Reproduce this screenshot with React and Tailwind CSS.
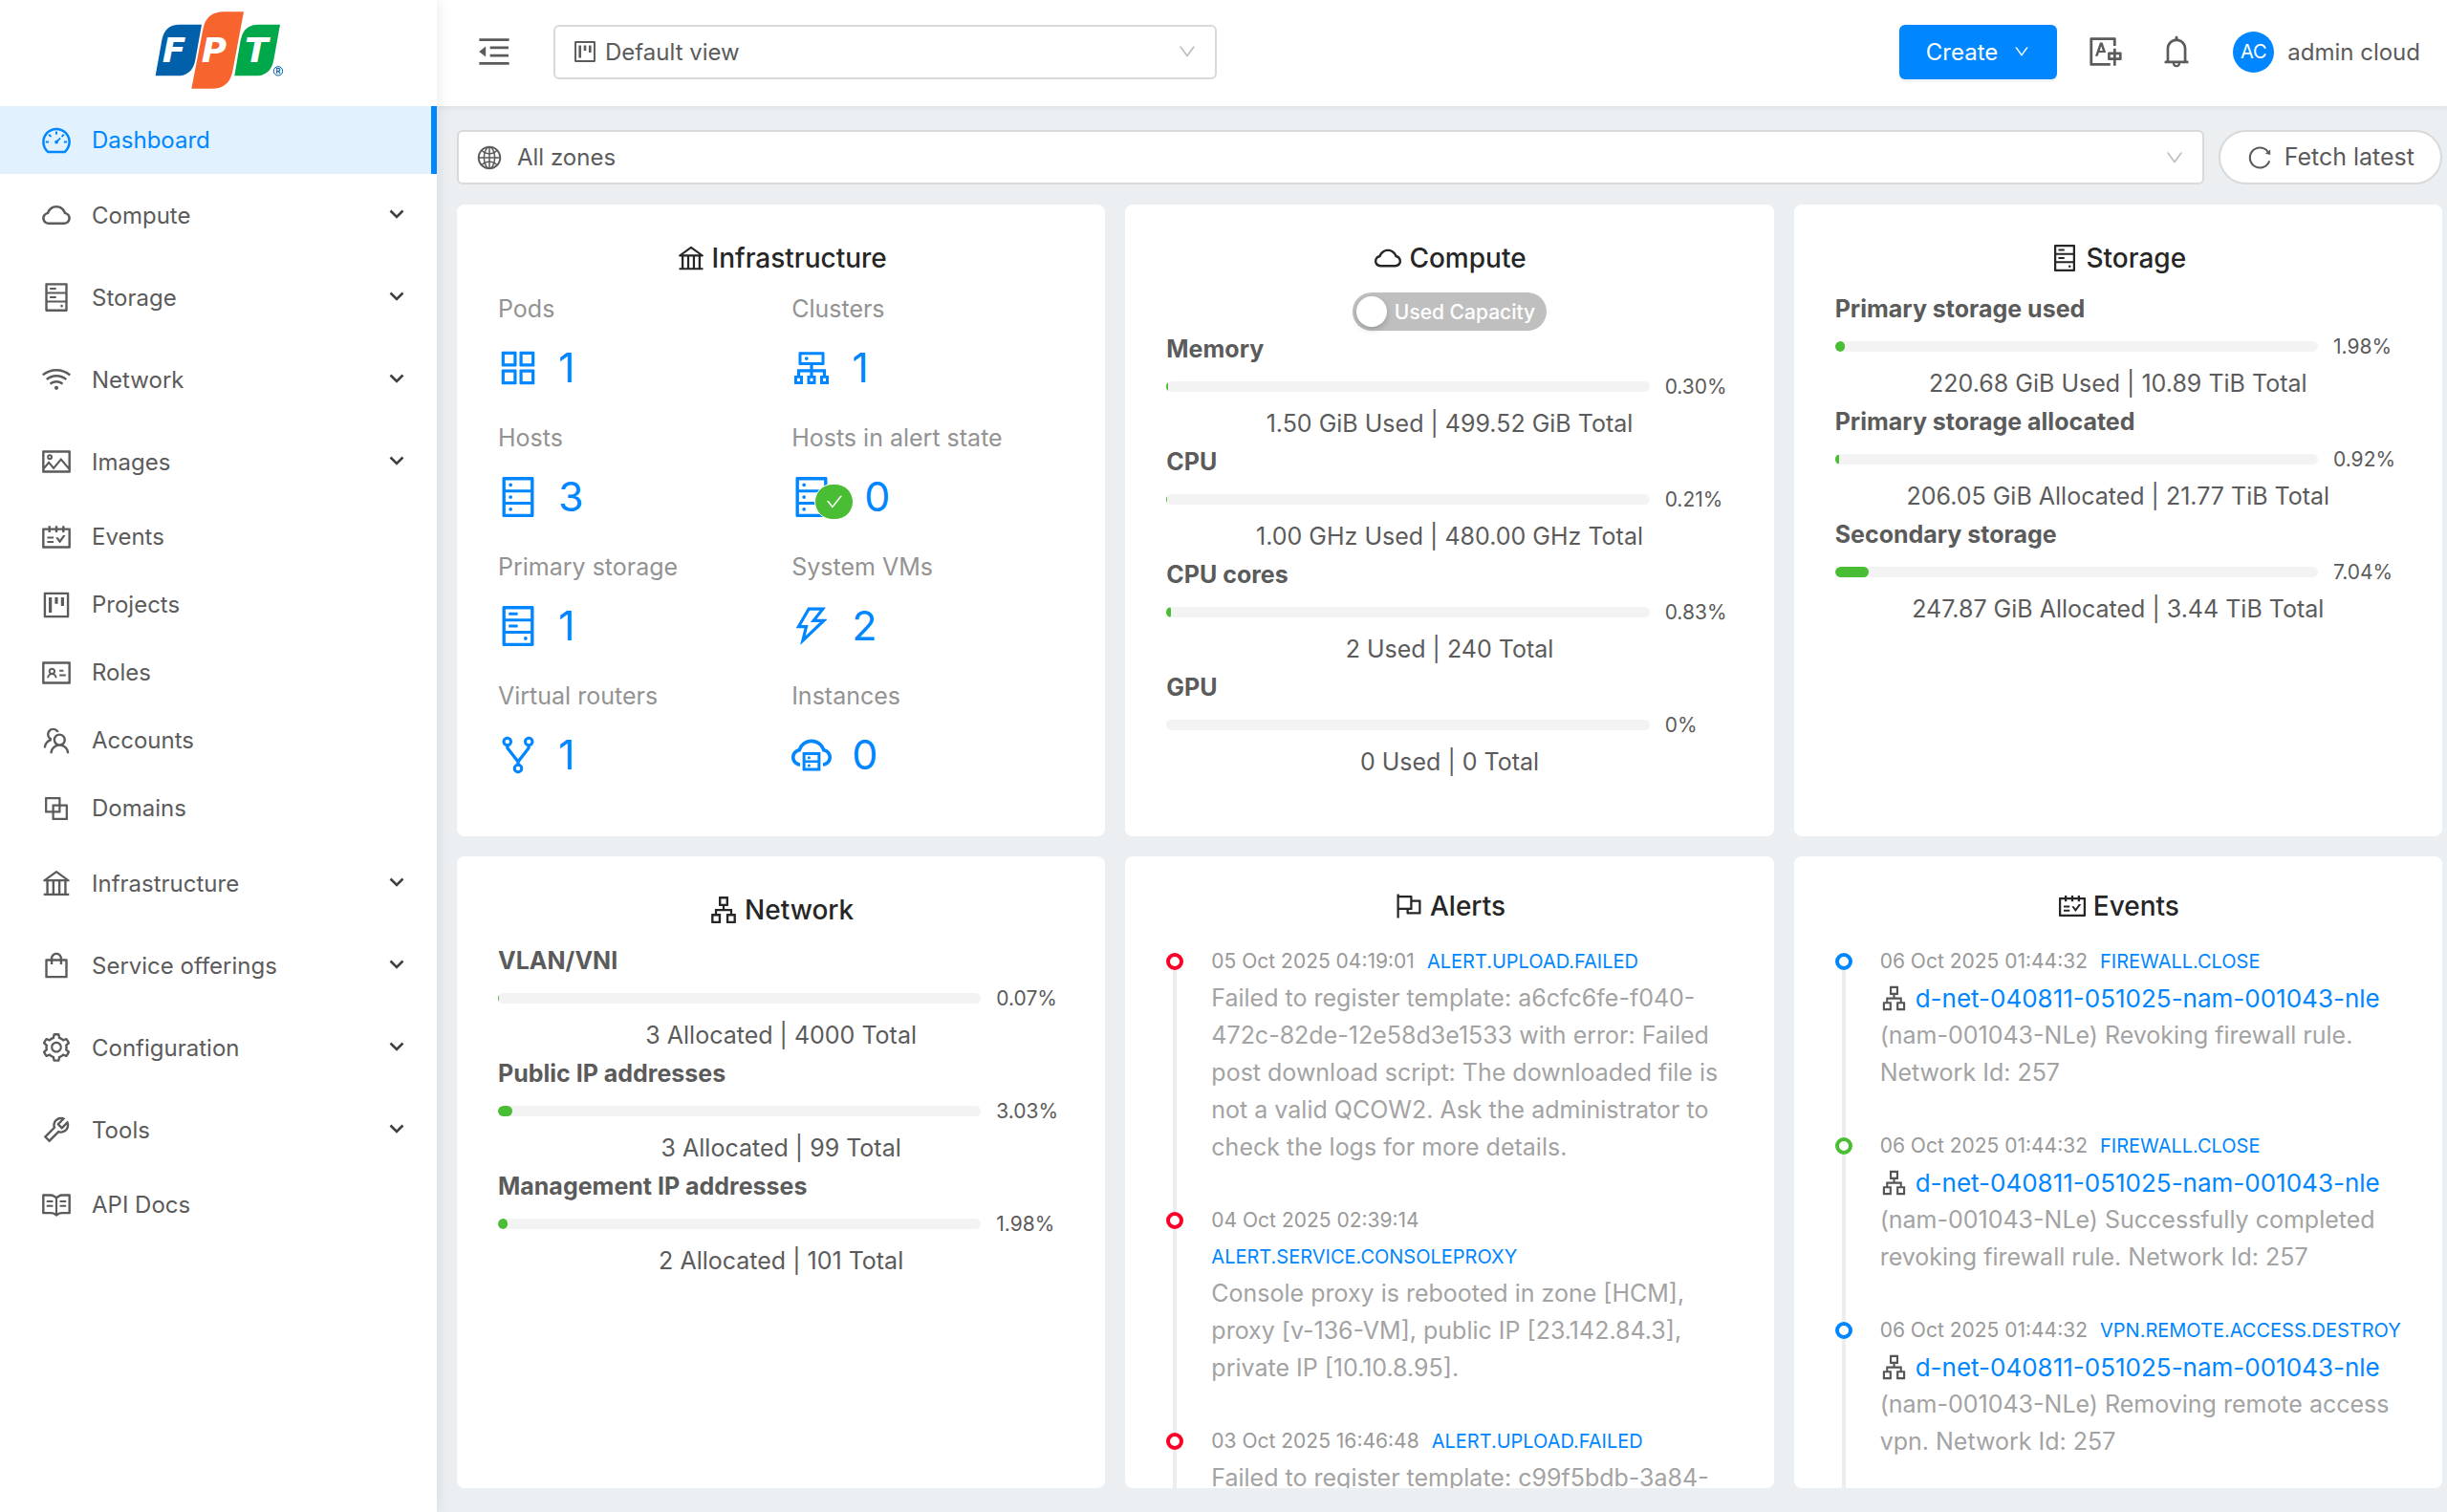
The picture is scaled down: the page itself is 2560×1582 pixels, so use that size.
import { AiOutlineDashboard, AiOutlineCloud, AiOutlineHdd, AiOutlineWifi, AiOutlinePicture, AiOutlineSchedule, AiOutlineProject, AiOutlineIdcard, AiOutlineTeam, AiOutlineBlock, AiOutlineBank, AiOutlineShopping, AiOutlineSetting, AiOutlineTool, AiOutlineRead, AiOutlineMenuFold, AiOutlineTranslation, AiOutlineBell, AiOutlineReload, AiOutlineGlobal, AiOutlineAppstore, AiOutlineCluster, AiOutlineDatabase, AiOutlineThunderbolt, AiOutlineFork, AiOutlineCloudServer, AiOutlineApartment, AiOutlineFlag, AiOutlineDown, AiOutlineCheck } from "react-icons/ai";

const MENU = [
  { label: "Dashboard", icon: AiOutlineDashboard, active: true },
  { label: "Compute", icon: AiOutlineCloud, sub: true },
  { label: "Storage", icon: AiOutlineHdd, sub: true },
  { label: "Network", icon: AiOutlineWifi, sub: true },
  { label: "Images", icon: AiOutlinePicture, sub: true },
  { label: "Events", icon: AiOutlineSchedule },
  { label: "Projects", icon: AiOutlineProject },
  { label: "Roles", icon: AiOutlineIdcard },
  { label: "Accounts", icon: AiOutlineTeam },
  { label: "Domains", icon: AiOutlineBlock },
  { label: "Infrastructure", icon: AiOutlineBank, sub: true },
  { label: "Service offerings", icon: AiOutlineShopping, sub: true },
  { label: "Configuration", icon: AiOutlineSetting, sub: true },
  { label: "Tools", icon: AiOutlineTool, sub: true },
  { label: "API Docs", icon: AiOutlineRead },
];

const STATS = [
  { label: "Pods", value: 1, icon: AiOutlineAppstore },
  { label: "Clusters", value: 1, icon: AiOutlineCluster },
  { label: "Hosts", value: 3, icon: AiOutlineDatabase },
  { label: "Hosts in alert state", value: 0, icon: AiOutlineDatabase, ok: true },
  { label: "Primary storage", value: 1, icon: AiOutlineHdd },
  { label: "System VMs", value: 2, icon: AiOutlineThunderbolt },
  { label: "Virtual routers", value: 1, icon: AiOutlineFork },
  { label: "Instances", value: 0, icon: AiOutlineCloudServer },
];

const COMPUTE = [
  { label: "Memory", pct: "0.30%", text: "1.50 GiB Used | 499.52 GiB Total" },
  { label: "CPU", pct: "0.21%", text: "1.00 GHz Used | 480.00 GHz Total" },
  { label: "CPU cores", pct: "0.83%", text: "2 Used | 240 Total" },
  { label: "GPU", pct: "0%", text: "0 Used | 0 Total" },
];
const STORAGE = [
  { label: "Primary storage used", pct: "1.98%", text: "220.68 GiB Used | 10.89 TiB Total" },
  { label: "Primary storage allocated", pct: "0.92%", text: "206.05 GiB Allocated | 21.77 TiB Total" },
  { label: "Secondary storage", pct: "7.04%", text: "247.87 GiB Allocated | 3.44 TiB Total" },
];
const NETWORK = [
  { label: "VLAN/VNI", pct: "0.07%", text: "3 Allocated | 4000 Total" },
  { label: "Public IP addresses", pct: "3.03%", text: "3 Allocated | 99 Total" },
  { label: "Management IP addresses", pct: "1.98%", text: "2 Allocated | 101 Total" },
];

const ALERTS = [
  { time: "05 Oct 2025 04:19:01", type: "ALERT.UPLOAD.FAILED", dot: "border-[#fa0028]", text: "Failed to register template: a6cfc6fe-f040-472c-82de-12e58d3e1533 with error: Failed post download script: The downloaded file is not a valid QCOW2. Ask the administrator to check the logs for more details." },
  { time: "04 Oct 2025 02:39:14", type: "ALERT.SERVICE.CONSOLEPROXY", dot: "border-[#fa0028]", text: "Console proxy is rebooted in zone [HCM], proxy [v-136-VM], public IP [23.142.84.3], private IP [10.10.8.95]." },
  { time: "03 Oct 2025 16:46:48", type: "ALERT.UPLOAD.FAILED", dot: "border-[#fa0028]", text: "Failed to register template: c99f5bdb-3a84-" },
];
const NET = "d-net-040811-051025-nam-001043-nle";
const EVENTS = [
  { time: "06 Oct 2025 01:44:32", type: "FIREWALL.CLOSE", dot: "border-[#0086ff]", link: NET, text: "(nam-001043-NLe) Revoking firewall rule. Network Id: 257" },
  { time: "06 Oct 2025 01:44:32", type: "FIREWALL.CLOSE", dot: "border-[#49bd34]", link: NET, text: "(nam-001043-NLe) Successfully completed revoking firewall rule. Network Id: 257" },
  { time: "06 Oct 2025 01:44:32", type: "VPN.REMOTE.ACCESS.DESTROY", dot: "border-[#0086ff]", link: NET, text: "(nam-001043-NLe) Removing remote access vpn. Network Id: 257" },
];

function Logo() {
  return (
    <svg viewBox="-4 0 480 330" className="h-[110px] w-[160px]" role="img" aria-label="FPT">
      <path d="M182 77L162 188Q153 238 104 238H37L57 126Q66 77 112 77Z" fill="#0060a9" />
      <path d="M314 37L279 224Q268 278 214 278H150L186 92Q196 37 252 37Z" fill="#f8642d" />
      <path d="M428 77L408 188Q399 238 350 238H285L304 126Q313 77 360 77Z" fill="#00a84c" />
      <g fill="#fff" fontFamily="'DejaVu Sans', sans-serif" fontWeight="700" fontStyle="italic" fontSize="108">
        <text x="58" y="196">F</text>
        <text x="181" y="196">P</text>
        <text x="317" y="196">T</text>
      </g>
      <circle cx="422" cy="223" r="14" fill="none" stroke="#0060a9" strokeWidth="3" />
      <text x="422" y="231" textAnchor="middle" fontSize="23" fontWeight="700" fill="#0060a9" fontFamily="Inter, sans-serif">R</text>
    </svg>
  );
}

function MenuItem({ label, icon: Icon, active, sub }) {
  return (
    <a
      href="#"
      className={
        "flex items-center pl-[42px] pr-[34px] " +
        (sub ? "my-2 h-[70px] " : "h-[71px] ") +
        (active ? "border-r-[6px] border-[#0086ff] bg-[#e1f2fe] text-[#0086ff]" : "")
      }
    >
      <Icon className="size-[34px]" />
      <span className="ml-5 flex-1">{label}</span>
      {sub && <Chevron />}
    </a>
  );
}

function Chevron() {
  return (
    <svg viewBox="0 0 16 12" className="h-3 w-4" fill="none" stroke="#404040" strokeWidth="2.6">
      <path d="M1.500 1.500L8 8L14.500 1.500" />
    </svg>
  );
}

function Card({ title, icon: Icon, children, tight }) {
  return (
    <section className={"h-[661px] overflow-hidden rounded-lg bg-white px-[43px] " + (tight ? "pt-8" : "pt-9")}>
      <h2 className="flex h-10 items-center justify-center gap-[6px] text-[28px] font-medium text-[#262626]">
        <Icon className="size-8" />
        {title}
      </h2>
      {children}
    </section>
  );
}

function Meters({ items }) {
  return items.map((m) => (
    <div key={m.label} className="h-[118px]">
      <h3 className="h-[39px] font-bold">{m.label}</h3>
      <div className="flex h-[39px] items-center gap-4">
        <div className="h-[11px] flex-1 overflow-hidden rounded-full bg-[#f3f3f3]">
          <div className="h-full rounded-full bg-[#49bd34]" style={{ width: m.pct }} />
        </div>
        <span className="w-[71px] text-[21px]">{m.pct}</span>
      </div>
      <p className="text-center">{m.text}</p>
    </div>
  ));
}

function Timeline({ items }) {
  return (
    <ol className="pt-[19px]">
      {items.map((e, i) => (
        <li key={i} className="flex gap-[29px]">
          <div className="flex flex-col items-center pt-[10px]">
            <span className={"size-[18px] shrink-0 rounded-full border-4 bg-white " + e.dot} />
            <span className="-mb-[10px] w-1 flex-1 bg-[#ededed]" />
          </div>
          <div className="min-w-0 flex-1 pb-[38px] text-[#a3a3a3]">
            <div className="flex flex-wrap gap-x-[13px] text-[20px] leading-[38px]">
              <span className="text-[21px] text-[#999]">{e.time}</span>
              <a href="#" className="text-[#0086ff]">{e.type}</a>
            </div>
            {e.link && (
              <div className="flex items-center gap-2">
                <AiOutlineApartment className="size-[29px] text-[#555]" />
                <a href="#" className="text-[26px] text-[#0086ff]">{e.link}</a>
              </div>
            )}
            <p>{e.text}</p>
          </div>
        </li>
      ))}
    </ol>
  );
}

export default function App() {
  return (
    <div className="flex h-screen overflow-hidden bg-[#ebeff2] font-['Inter',sans-serif] text-[25px] leading-[39px] text-[#5b5b5b]">
      <aside className="z-10 w-[457px] shrink-0 bg-white text-[24px] shadow-[2px_0_14px_rgba(0,21,41,0.08)]">
        <div className="flex h-[111px] justify-center">
          <Logo />
        </div>
        <nav className="flex flex-col">
          {MENU.map((m) => (
            <MenuItem key={m.label} {...m} />
          ))}
        </nav>
      </aside>

      <div className="flex min-w-0 flex-1 flex-col">
        <header className="flex h-[111px] shrink-0 items-center bg-white pb-[3px] pl-10 pr-7 text-[24px] shadow-[0_1px_6px_rgba(0,21,41,0.08)]">
          <button type="button" aria-label="Collapse menu">
            <AiOutlineMenuFold className="size-10" />
          </button>
          <button type="button" className="ml-[42px] flex h-[57px] w-[694px] items-center rounded-md border-2 border-[#d9d9d9] pl-[17px] pr-[18px]">
            <AiOutlineProject className="size-7" />
            <span className="ml-[7px]">Default view</span>
            <AiOutlineDown className="ml-auto size-[22px] text-[#bfbfbf]" />
          </button>
          <button type="button" className="ml-auto flex h-[57px] items-center gap-4 rounded-md bg-[#0086ff] px-7 text-white shadow-[0_3px_0_rgba(0,0,0,0.04)]">
            Create
            <AiOutlineDown className="size-[18px]" />
          </button>
          <button type="button" aria-label="Language" className="ml-8">
            <AiOutlineTranslation className="size-[38px]" />
          </button>
          <button type="button" aria-label="Notifications" className="ml-9">
            <AiOutlineBell className="size-[38px]" />
          </button>
          <button type="button" className="ml-10 flex items-center gap-[14px]">
            <span className="flex size-[43px] items-center justify-center rounded-full bg-[#0086ff] text-[20px] text-white">AC</span>
            admin cloud
          </button>
        </header>

        <main className="flex flex-col gap-[21px] pl-[21px] pr-[5px] pt-[25px]">
          <div className="flex gap-[15px]">
            <button type="button" className="flex h-[57px] flex-1 items-center rounded-md border-2 border-[#d9d9d9] bg-white pl-[18px] pr-[18px] text-[24px]">
              <AiOutlineGlobal className="size-7" />
              <span className="ml-[15px]">All zones</span>
              <AiOutlineDown className="ml-auto size-[22px] text-[#bfbfbf]" />
            </button>
            <button type="button" className="flex h-[57px] items-center gap-3 rounded-full border-2 border-[#d9d9d9] bg-white px-[27px]">
              <AiOutlineReload className="size-7" />
              Fetch latest
            </button>
          </div>

          <div className="grid grid-cols-3 gap-[21px]">
            <Card title="Infrastructure" icon={AiOutlineBank}>
              <dl className="grid grid-cols-2 gap-x-[22px] pt-[14px]">
                {STATS.map(({ label, value, icon: Icon, ok }) => (
                  <div key={label} className="h-[135px]">
                    <dt className="text-[#939393]">{label}</dt>
                    <dd className="-ml-[3px] mt-2 flex h-[67px] items-center text-[43px] text-[#0086ff]">
                      <span className={"relative " + (ok ? "mr-[31px]" : "mr-[18px]")}>
                        <Icon className="size-12" />
                        {ok && (
                          <span className="absolute left-[27px] top-[10px] flex h-[38px] w-[41px] items-center justify-center rounded-full border border-white bg-[#49bd34] text-white">
                            <AiOutlineCheck className="size-5" />
                          </span>
                        )}
                      </span>
                      {value}
                    </dd>
                  </div>
                ))}
              </dl>
            </Card>
            <Card title="Compute" icon={AiOutlineCloud}>
              <div className="flex justify-center pt-4">
                <button type="button" role="switch" aria-checked="false" className="flex h-10 items-center gap-2 rounded-full bg-[#bfbfbf] pl-1 pr-3 text-[21px] font-medium text-white">
                  <span className="size-8 rounded-full bg-white shadow-[0_3px_6px_rgba(0,35,11,0.2)]" />
                  Used Capacity
                </button>
              </div>
              <Meters items={COMPUTE} />
            </Card>
            <Card title="Storage" icon={AiOutlineHdd}>
              <div className="pt-[14px]">
                <Meters items={STORAGE} />
              </div>
            </Card>
            <Card title="Network" icon={AiOutlineApartment}>
              <div className="pt-[14px]">
                <Meters items={NETWORK} />
              </div>
            </Card>
            <Card title="Alerts" icon={AiOutlineFlag} tight>
              <Timeline items={ALERTS} />
            </Card>
            <Card title="Events" icon={AiOutlineSchedule} tight>
              <Timeline items={EVENTS} />
            </Card>
          </div>
        </main>
      </div>
    </div>
  );
}
